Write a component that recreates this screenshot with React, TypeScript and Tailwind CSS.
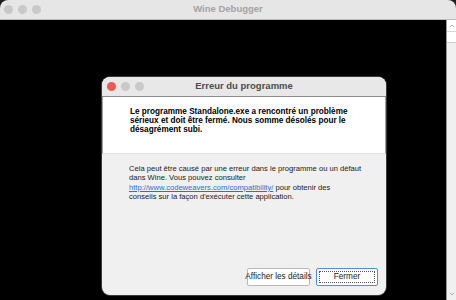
import { ChevronUp, ChevronDown } from "lucide-react";

const Lights = ({ first }: { first: string }) => (
  <div className="flex items-center gap-[5px]">
    <span className={`w-[9px] h-[9px] rounded-full ${first}`} />
    <span className="w-[9px] h-[9px] rounded-full bg-[#c9c9c9]" />
    <span className="w-[9px] h-[9px] rounded-full bg-[#c9c9c9]" />
  </div>
);

const ErrorDialog = () => (
  <div className="w-[284px] h-[218px] rounded-[8px] overflow-hidden bg-[#f0f0f0] flex flex-col shadow-[0_0_0_1px_#3a3a3a]">
    {/* title bar */}
    <div className="relative h-[20px] bg-[#e8e8e8] border-b border-[#8c8c8c] flex items-center px-[5px]">
      <Lights first="bg-[#ee5a52]" />
      <div className="absolute inset-0 flex items-center justify-center text-[9.5px] font-bold text-[#4c4c4c]">
        Erreur du programme
      </div>
    </div>
    {/* message */}
    <div className="h-[57px] bg-white border-l border-r border-[#a0a0a0] border-b border-b-[#e2e2e2] pl-[27px] pr-[30px] pt-[10px]">
      <p className="text-[8.2px] leading-[9px] font-bold text-black">
        Le programme Standalone.exe a rencontré un problème sérieux et doit être fermé. Nous somme désolés pour le désagrément subi.
      </p>
    </div>
    {/* details */}
    <div className="flex-1 flex flex-col pl-[27px] pr-[8px] pt-[10px] pb-[9px]">
      <p className="text-[7.6px] leading-[9.3px] text-[#1a1a1a] pr-[14px]">
        Cela peut être causé par une erreur dans le programme ou un défaut dans Wine. Vous pouvez consulter{" "}
        <span className="text-[#2a6fd6] underline">http://www.codeweavers.com/compatibility/</span> pour obtenir des
        <br />
        conseils sur la façon d'exécuter cette application.
      </p>
      <div className="mt-auto flex justify-end gap-[6px]">
        <button className="w-[63px] h-[18px] bg-white border border-[#b8b8b8] rounded-[2px] text-[8.2px] text-[#1a1a1a] flex items-center justify-center whitespace-nowrap">
          Afficher les détails
        </button>
        <button className="w-[62px] h-[18px] bg-white border border-[#4f8fd8] rounded-[2px] p-[2px] flex">
          <span className="flex-1 border border-dotted border-[#555] flex items-center justify-center text-[8.2px] text-[#1a1a1a]">
            Fermer
          </span>
        </button>
      </div>
    </div>
  </div>
);

export default function App() {
  return (
    <div className="w-[456px] h-[300px] bg-[#1c1c1c] overflow-hidden" style={{ fontFamily: "'Liberation Sans', Arial, sans-serif" }}>
      <div className="w-full h-full rounded-t-[8px] overflow-hidden flex flex-col bg-black">
        {/* main window title bar */}
        <div className="relative h-[20px] bg-[#e6e6e6] border-b border-[#bdbdbd] flex items-center px-[4px] shrink-0">
          <Lights first="bg-[#c9c9c9]" />
          <div className="absolute inset-0 flex items-center justify-center text-[9.5px] font-bold text-[#a3a3a3]">
            Wine Debugger
          </div>
        </div>
        <div className="flex-1 flex min-h-0">
          {/* console area */}
          <div className="flex-1 bg-black pl-[102px] pt-[57px]">
            <ErrorDialog />
          </div>
          {/* scrollbar */}
          <div className="w-[10px] bg-[#f0f0f0] border-l border-[#9a9a9a] flex flex-col">
            <div className="h-[12px] bg-white flex items-center justify-center border-b border-[#d8d8d8]">
              <ChevronUp size={8} strokeWidth={1.5} color="#666" />
            </div>
            <div className="h-[11px] bg-white border-b border-[#cfcfcf]" />
            <div className="flex-1" />
            <div className="h-[12px] flex items-center justify-center">
              <ChevronDown size={8} strokeWidth={1.5} color="#666" />
            </div>
          </div>
        </div>
      </div>
    </div>
  );
}
